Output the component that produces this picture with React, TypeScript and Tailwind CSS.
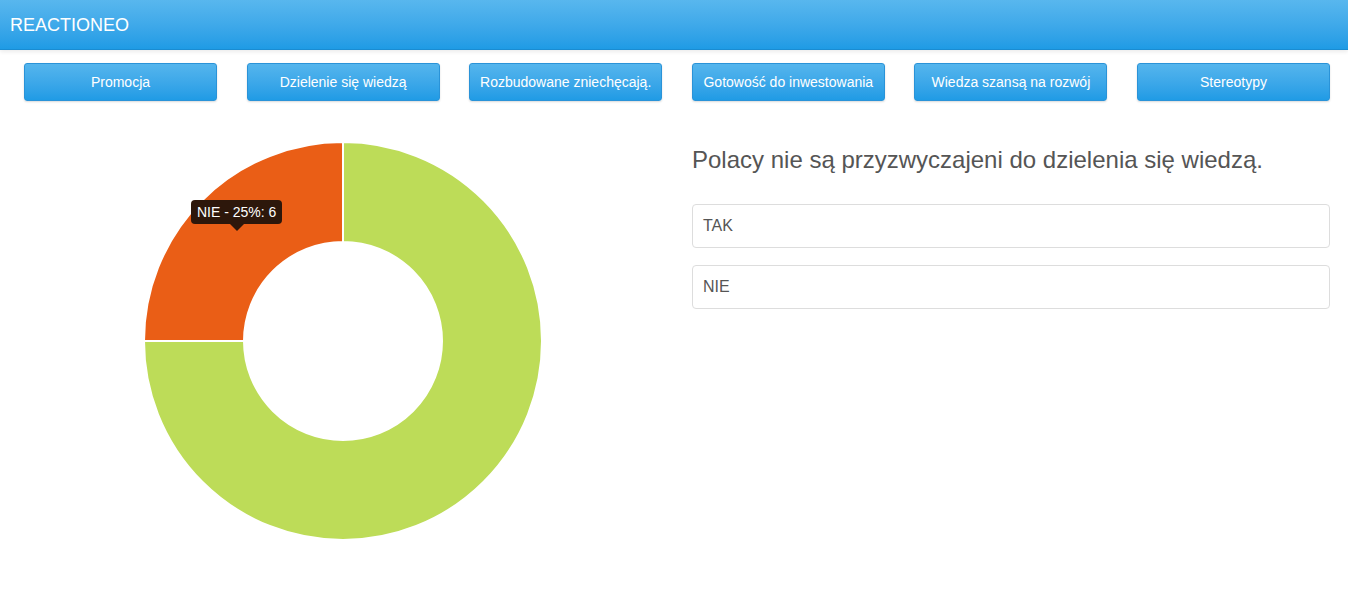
import React from "react";

const topics = [
  "Promocja",
  "Dzielenie się wiedzą",
  "Rozbudowane zniechęcają.",
  "Gotowość do inwestowania",
  "Wiedza szansą na rozwój",
  "Stereotypy",
];

const answers = ["TAK", "NIE"];

// Donut drawn in a 400x400 box, center (200,200)
const Donut: React.FC = () => (
  <div className="relative w-[400px] h-[400px]">
    <svg viewBox="0 0 400 400" className="w-[400px] h-[400px]">
      <path
        d="M 200 1 A 199 199 0 1 1 1 200 L 101 200 A 99 99 0 1 0 200 101 Z"
        fill="#bddc58"
        stroke="#ffffff"
        strokeWidth="2"
      />
      <path
        d="M 200 1 A 199 199 0 0 0 1 200 L 101 200 A 99 99 0 0 1 200 101 Z"
        fill="#ea5e16"
        stroke="#ffffff"
        strokeWidth="2"
      />
    </svg>
    {/* tooltip */}
    <div className="absolute left-[48px] top-[59px] flex flex-col items-center">
      <div className="h-[24px] px-[6px] flex items-center rounded-[4px] bg-[#2d170b] text-white text-[14px] font-medium leading-none whitespace-nowrap">
        NIE - 25%: 6
      </div>
      <div className="w-0 h-0 border-l-[7px] border-r-[7px] border-t-[7px] border-l-transparent border-r-transparent border-t-[#2d170b]" />
    </div>
  </div>
);

export default function App() {
  return (
    <div className="min-h-[612px] bg-white font-['Liberation_Sans',Arial,sans-serif]">
      <header className="h-[50px] bg-gradient-to-b from-[#58b7ee] to-[#1e9be5] border-b border-[#1a8cd2] shadow-[0_2px_4px_rgba(0,0,0,0.08)] flex items-center px-[10px]">
        <span className="text-white text-[18px] leading-none">REACTIONEO</span>
      </header>

      <nav className="grid grid-cols-6 gap-[29.6px] pl-[24px] pr-[18px] mt-[13px]">
        {topics.map((t) => (
          <button
            key={t}
            className="h-[38px] rounded-[3px] border border-[#2a93d8] bg-gradient-to-b from-[#54b5ed] to-[#1f9be5] text-white text-[14px] shadow-[0_1px_2px_rgba(0,0,0,0.15)] whitespace-nowrap overflow-hidden"
          >
            {t}
          </button>
        ))}
      </nav>

      <main className="flex mt-[40px]">
        <div className="w-[674px] pl-[12px] flex justify-center">
          <Donut />
        </div>
        <div className="flex-1 pl-[18px] pr-[18px]">
          <h2 className="mt-[5px] text-[24px] leading-[28px] text-[#555555]">
            Polacy nie są przyzwyczajeni do dzielenia się wiedzą.
          </h2>
          <ul className="mt-[30px] flex flex-col gap-[17px]">
            {answers.map((a) => (
              <li
                key={a}
                className="h-[44px] px-[10px] flex items-center border border-[#dddddd] rounded-[4px] text-[16px] text-[#555555]"
              >
                {a}
              </li>
            ))}
          </ul>
        </div>
      </main>
    </div>
  );
}
